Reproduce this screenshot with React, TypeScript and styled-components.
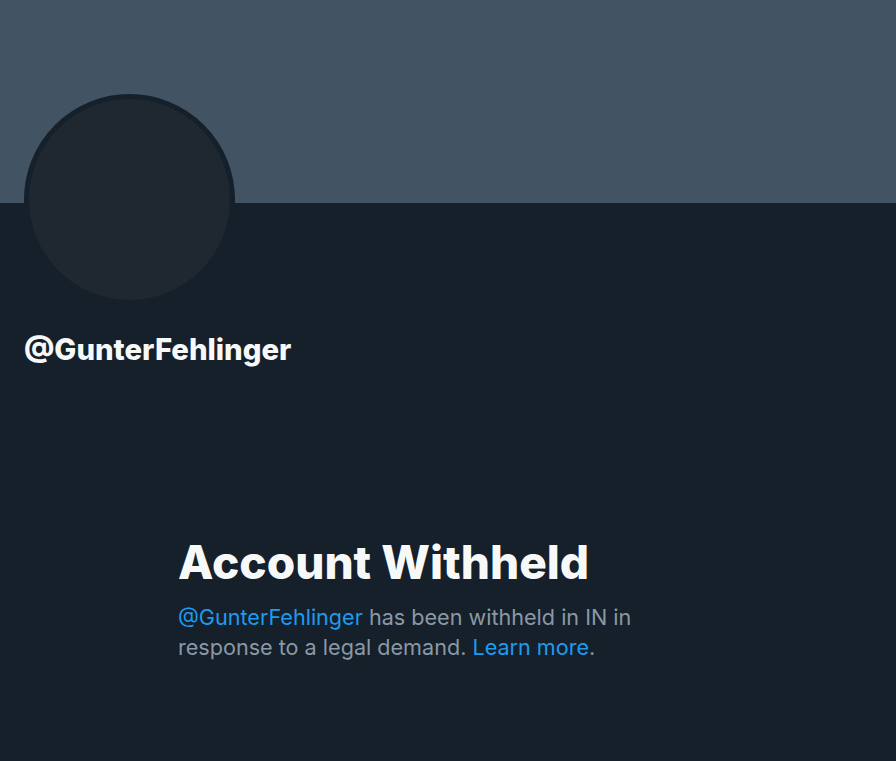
import React from 'react';
import styled, { createGlobalStyle } from 'styled-components';

const GlobalStyle = createGlobalStyle`
  html, body {
    margin: 0;
    padding: 0;
    background: #15202b;
  }
  body {
    font-family: Inter, "Liberation Sans", sans-serif;
    color: #f7f9f9;
  }
`;

const Page = styled.div`
  width: 896px;
  min-height: 761px;
  background: #15202b;
  overflow: hidden;
`;

const Banner = styled.div`
  height: 203px;
  background: #425364;
`;

const ProfileHead = styled.div`
  padding: 0 24px;
`;

const Avatar = styled.div`
  width: 201px;
  height: 201px;
  margin-top: -109px;
  border-radius: 50%;
  border: 5px solid #15202b;
  background: #1f2731;
`;

const Handle = styled.h1`
  margin: 27px 0 0;
  font-size: 29.3px;
  font-weight: 800;
  line-height: 36px;
  letter-spacing: 0;
  color: #f7f9f9;
`;

const EmptyState = styled.section`
  width: 540px;
  margin: 168px auto 0;
`;

const Title = styled.h2`
  margin: 0;
  font-size: 46px;
  font-weight: 800;
  line-height: 52px;
  letter-spacing: 0;
  color: #f7f9f9;
`;

const Body = styled.p`
  margin: 14px 0 0;
  max-width: 480px;
  font-size: 21.6px;
  line-height: 30px;
  color: #8b98a5;
`;

const Link = styled.a`
  color: #1d9bf0;
  text-decoration: none;
`;

export default function App() {
  return (
    <Page>
      <GlobalStyle />
      <Banner />
      <ProfileHead>
        <Avatar />
        <Handle>@GunterFehlinger</Handle>
      </ProfileHead>
      <EmptyState>
        <Title>Account Withheld</Title>
        <Body>
          <Link href="#">@GunterFehlinger</Link> has been withheld in IN in response to a legal
          demand. <Link href="#">Learn more</Link>.
        </Body>
      </EmptyState>
    </Page>
  );
}
